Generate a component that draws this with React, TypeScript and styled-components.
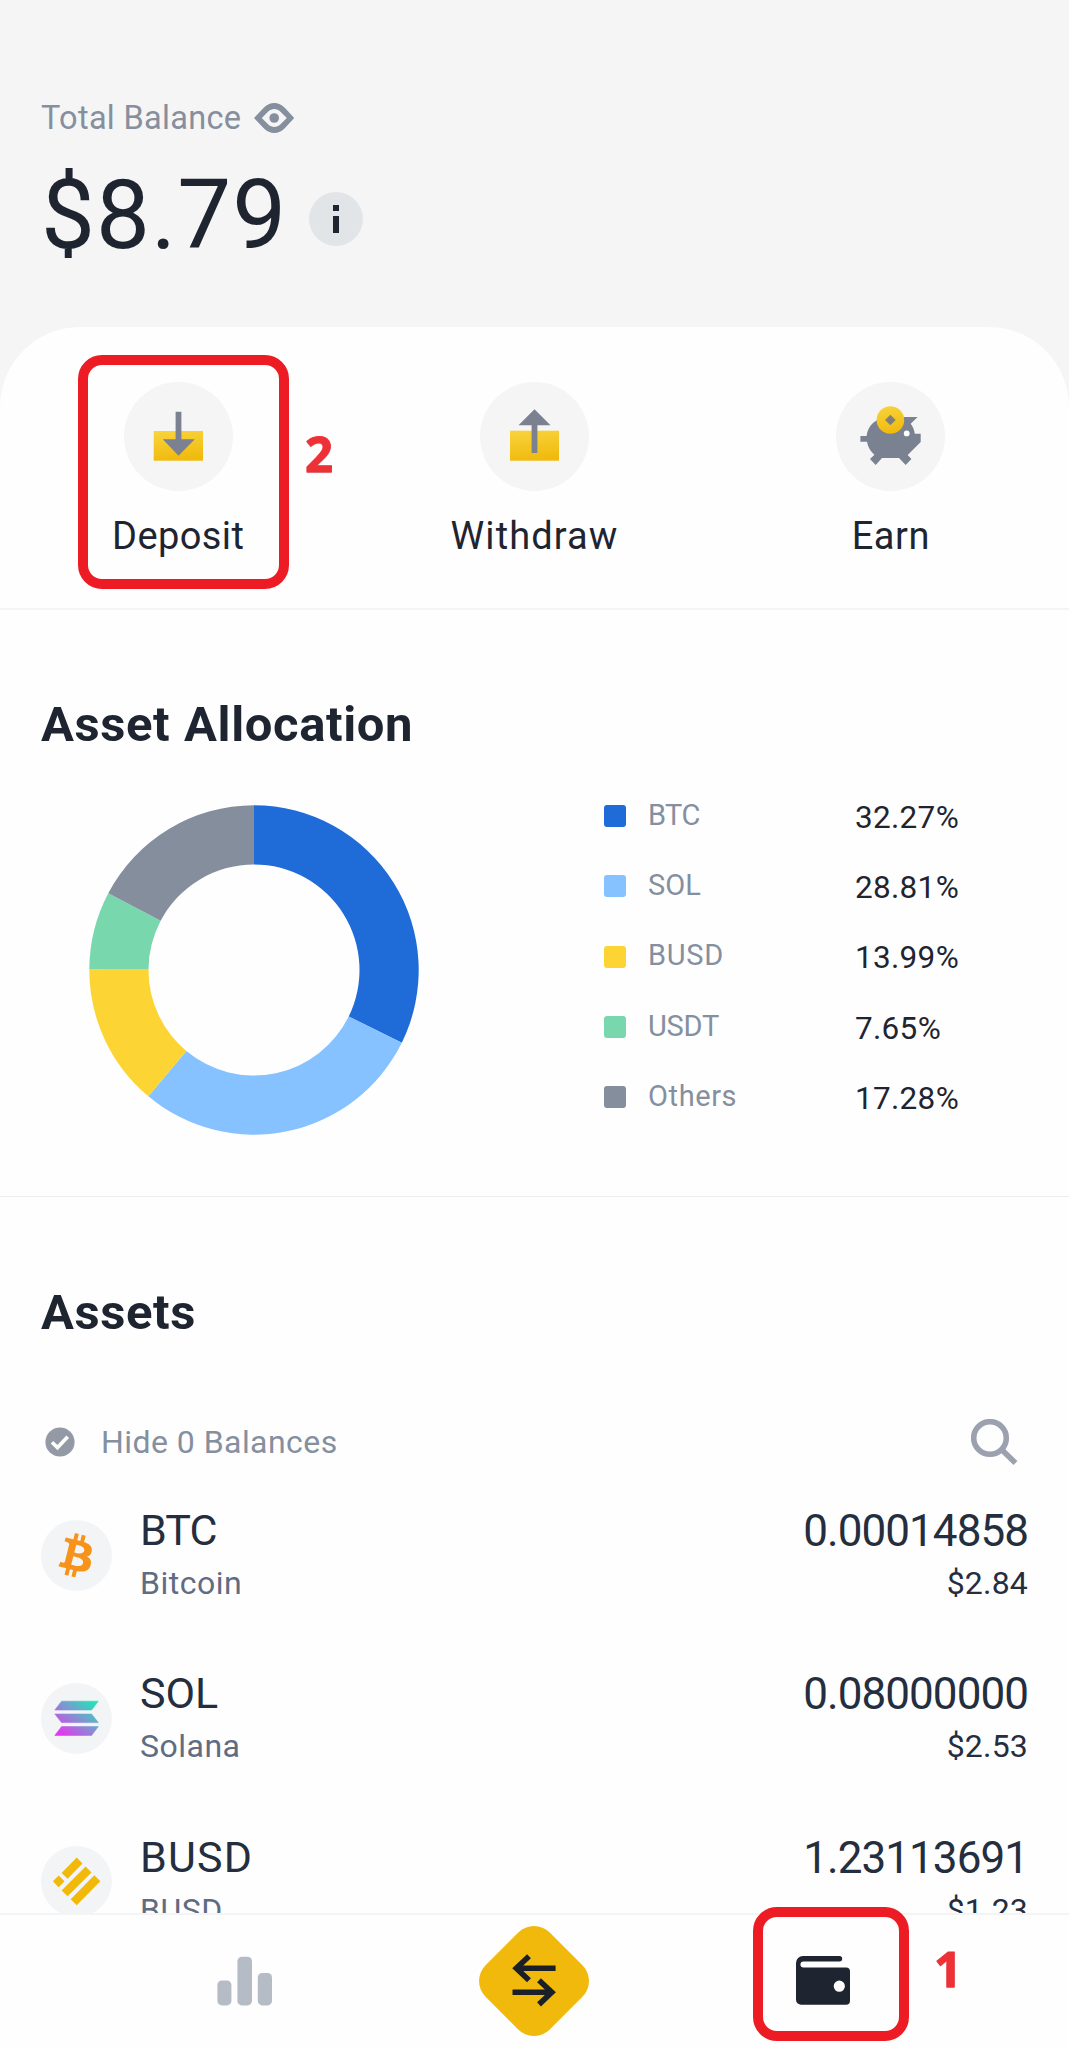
import React from "react";
import styled, { createGlobalStyle } from "styled-components";

const GlobalStyle = createGlobalStyle`
  *, *::before, *::after { box-sizing: border-box; }
  body { margin: 0; background: #f5f5f5; }
  svg { display: block; flex: none; }
`;

const ink = "#1e2530";
const slate = "#252e3f";
const muted = "#858f9e";
const line = "#f4f4f5";

const Screen = styled.div`
  position: relative;
  display: flex;
  flex-direction: column;
  width: 1069px;
  height: 2048px;
  overflow: hidden;
  background: #f5f5f5;
  color: ${ink};
  font-family: Roboto, "Liberation Sans", sans-serif;
`;

const Header = styled.header`
  height: 327px;
  flex: none;
  padding: 98px 41px 0;
`;

const BalanceLabel = styled.div`
  display: flex;
  align-items: center;
  gap: 13px;
  height: 40px;
  font-size: 32.5px;
  line-height: 40px;
  letter-spacing: 0.3px;
  color: ${muted};
`;

const BalanceRow = styled.div`
  display: flex;
  align-items: center;
  margin-top: 22px;
  height: 110px;
`;

const BalanceValue = styled.div`
  width: 268px;
  font-size: 96px;
  line-height: 110px;
  letter-spacing: 1px;
`;

const InfoBadge = styled.div`
  display: flex;
  align-items: center;
  justify-content: center;
  width: 54px;
  height: 54px;
  margin-top: 8px;
  border-radius: 50%;
  background: #e2e5e8;
`;

const Sheet = styled.main`
  flex: 1;
  min-height: 0;
  overflow: hidden;
  border-radius: 80px 80px 0 0;
  background: #fefefe;
`;

const Actions = styled.section`
  display: grid;
  grid-template-columns: repeat(3, 1fr);
  height: 283px;
  padding-top: 55px;
  border-bottom: 2px solid ${line};
`;

const Action = styled.div`
  display: flex;
  flex-direction: column;
  align-items: center;
  gap: 22px;
`;

const ActionIcon = styled.div`
  width: 109px;
  height: 109px;
  border-radius: 50%;
  background: #f5f5f5;
`;

const ActionLabel = styled.div<{ $tracking: number }>`
  font-size: 38px;
  line-height: 46px;
  letter-spacing: ${(p) => p.$tracking}px;
`;

const Allocation = styled.section`
  height: 587px;
  padding: 85px 41px 0;
  border-bottom: 1px solid #eeeeef;
`;

const Title = styled.h2`
  margin: 0;
  font-size: 49px;
  line-height: 60px;
  font-weight: 700;
  letter-spacing: 0.6px;
  word-spacing: 1px;
`;

const AllocationBody = styled.div`
  display: flex;
  margin-top: 26px;
`;

const DonutBox = styled.div`
  width: 563px;
  padding: 24px 0 0 48px;
`;

const Legend = styled.div`
  display: grid;
  grid-auto-rows: 70.3px;
`;

const LegendRow = styled.div`
  display: grid;
  grid-template-columns: 44px 207px auto;
  align-items: center;
`;

const Swatch = styled.span<{ $color: string }>`
  width: 22px;
  height: 22px;
  border-radius: 3px;
  background: ${(p) => p.$color};
`;

const LegendName = styled.span<{ $tracking: number }>`
  padding-bottom: 3px;
  font-size: 29px;
  line-height: 36px;
  letter-spacing: ${(p) => p.$tracking}px;
  color: ${muted};
`;

const LegendValue = styled.span`
  padding-top: 3px;
  font-size: 31.5px;
  line-height: 36px;
  font-weight: 450;
  letter-spacing: 0.3px;
`;

const Assets = styled.section`
  padding: 86px 41px 0;
`;

const FilterRow = styled.div`
  display: flex;
  align-items: center;
  height: 46px;
  margin-top: 76px;
  padding: 0 10px 0 4px;
`;

const FilterLabel = styled.span`
  flex: 1;
  padding-left: 26px;
  font-size: 32px;
  line-height: 40px;
  letter-spacing: 0.45px;
  color: ${muted};
`;

const AssetList = styled.div`
  display: grid;
  grid-auto-rows: 163.3px;
  margin-top: 41px;
`;

const AssetRow = styled.div`
  display: grid;
  grid-template-columns: 71px 1fr auto;
  column-gap: 28px;
  align-items: start;
`;

const CoinBadge = styled.div`
  width: 71px;
  height: 71px;
  margin-top: 13.5px;
  border-radius: 50%;
  background: #f2f4f6;
`;

const AssetText = styled.div<{ $end?: boolean }>`
  display: grid;
  row-gap: 8px;
  justify-items: ${(p) => (p.$end ? "end" : "start")};
  margin-top: -1px;
  color: ${slate};
`;

const Ticker = styled.span<{ $tracking: number }>`
  font-size: 43px;
  line-height: 50px;
  letter-spacing: ${(p) => p.$tracking}px;
`;

const CoinName = styled.span`
  font-size: 32px;
  line-height: 40px;
  letter-spacing: 0.5px;
  color: #606c82;
`;

const Amount = styled.span`
  padding-top: 2px;
  font-size: 44px;
  line-height: 48px;
  letter-spacing: -0.95px;
`;

const Fiat = styled.span`
  font-size: 32px;
  line-height: 40px;
  letter-spacing: 0.2px;
`;

const TabBar = styled.nav`
  display: grid;
  grid-template-columns: repeat(3, 289px);
  justify-content: center;
  place-items: center;
  flex: none;
  height: 135px;
  padding: 0 2px 2px 0;
  border-top: 2px solid ${line};
  background: #fefefe;
`;

const Callout = styled.div<{ $x: number; $y: number; $w: number; $h: number }>`
  position: absolute;
  left: ${(p) => p.$x}px;
  top: ${(p) => p.$y}px;
  width: ${(p) => p.$w}px;
  height: ${(p) => p.$h}px;
  border: 10px solid #ed1c24;
  border-radius: 24px;
`;

const CalloutNumber = styled.div<{ $x: number; $y: number }>`
  position: absolute;
  left: ${(p) => p.$x}px;
  top: ${(p) => p.$y}px;
  font-family: "Noto Sans", "Open Sans", sans-serif;
  font-size: 49px;
  line-height: 60px;
  font-weight: 700;
  color: #ee3137;
  -webkit-text-stroke: 1px #ee3137;
  text-shadow: 0 1px 1px rgba(110, 60, 60, 0.45);
`;

const slices = [
  { name: "BTC", value: 32.27, color: "#1f6cd8", tracking: -0.6 },
  { name: "SOL", value: 28.81, color: "#85c2ff", tracking: 0 },
  { name: "BUSD", value: 13.99, color: "#fcd535", tracking: 0.7 },
  { name: "USDT", value: 7.65, color: "#79d7ae", tracking: -0.2 },
  { name: "Others", value: 17.28, color: "#858e9d", tracking: 0.6 },
];

function Donut() {
  const c = 165;
  const outer = 164.7;
  const inner = 105.5;
  const at = (r: number, pct: number) => {
    const a = (pct / 100) * Math.PI * 2;
    return `${c + r * Math.sin(a)} ${c - r * Math.cos(a)}`;
  };
  let start = 0;
  return (
    <svg width="330" height="330" viewBox="0 0 330 330">
      {slices.map((s) => {
        const end = start + s.value;
        const d = `M${at(outer, start)} A${outer} ${outer} 0 0 1 ${at(outer, end)} L${at(inner, end)} A${inner} ${inner} 0 0 0 ${at(inner, start)} Z`;
        start = end;
        return <path key={s.name} d={d} fill={s.color} />;
      })}
    </svg>
  );
}

const Gold = ({ id }: { id: string }) => (
  <defs>
    <linearGradient id={id} x1="0.4" y1="0" x2="0.6" y2="1">
      <stop offset="0" stopColor="#f8d23a" />
      <stop offset="1" stopColor="#f0b90b" />
    </linearGradient>
  </defs>
);

const DepositIcon = () => (
  <svg width="109" height="109">
    <Gold id="goldDeposit" />
    <rect x="29.7" y="49" width="49.3" height="29.7" fill="url(#goldDeposit)" />
    <path d="M51.6 29.8h5.8v27.5h13.4L54.5 73.7 38.8 57.3h12.8z" fill="#7b8190" />
  </svg>
);

const WithdrawIcon = () => (
  <svg width="109" height="109">
    <Gold id="goldWithdraw" />
    <rect x="30" y="48.7" width="49" height="30" fill="url(#goldWithdraw)" />
    <path d="M54.5 27.3 70.5 43.3H57.4V71h-5.8V43.3H38.5z" fill="#7b8190" />
  </svg>
);

const EarnIcon = () => (
  <svg width="109" height="109">
    <Gold id="goldEarn" />
    <path
      d="M24.4 54H30.6C31.5 46 36 40 43 37.2L68.3 35H81.6L74.7 41.8C76.8 44.5 78.3 48 78.8 51.7H84.7V60L71.7 73 75.4 77 69.7 83 63 76H46L39.7 83 34 77 38.4 72.7C34.5 69.3 31.8 65 31 59.7H24.4z"
      fill="#7a8190"
    />
    <circle cx="70.7" cy="51.4" r="2.9" fill="#fff" />
    <circle cx="54.4" cy="38" r="13.8" fill="url(#goldEarn)" />
    <path d="M54.4 33.2 59.2 38 54.4 42.8 49.6 38z" fill="#7f7f78" stroke="#7f7f78" strokeWidth="1" strokeLinejoin="round" />
  </svg>
);

const BitcoinLogo = () => (
  <svg width="71" height="71" viewBox="0.3 0.1 32 32">
    <path
      fill="#f7931a"
      d="M23.189 14.02c.314-2.096-1.283-3.223-3.465-3.975l.708-2.84-1.728-.43-.69 2.765c-.454-.114-.92-.22-1.385-.326l.695-2.783L15.596 6l-.708 2.839c-.376-.086-.746-.17-1.104-.26l.002-.009-2.384-.595-.46 1.846s1.283.294 1.256.312c.7.175.826.638.805 1.006l-.806 3.235c.048.012.11.03.18.057l-.183-.045-1.13 4.532c-.086.212-.303.531-.793.41.018.025-1.256-.313-1.256-.313l-.858 1.978 2.25.561c.418.105.828.215 1.231.318l-.715 2.872 1.727.43.708-2.84c.472.127.93.245 1.378.357l-.706 2.828 1.728.43.715-2.866c2.948.558 5.164.333 6.097-2.333.752-2.146-.037-3.385-1.588-4.192 1.13-.26 1.98-1.003 2.207-2.538zm-3.95 5.538c-.533 2.147-4.148.986-5.32.695l.95-3.805c1.172.293 4.929.872 4.37 3.11zm.535-5.569c-.487 1.953-3.495.96-4.47.717l.86-3.45c.975.243 4.118.696 3.61 2.733z"
    />
  </svg>
);

const SolanaLogo = () => (
  <svg width="71" height="71">
    <defs>
      <linearGradient id="solana" gradientUnits="userSpaceOnUse" x1="20" y1="56" x2="52" y2="14">
        <stop offset="0.05" stopColor="#e834f0" />
        <stop offset="0.55" stopColor="#799ad0" />
        <stop offset="1" stopColor="#14efb2" />
      </linearGradient>
    </defs>
    <path
      d="M20.6 18.2H57.3L50.6 27H13.8zM13.8 31H50.6L57.3 39.6H20.6zM20.6 43.6H57.3L50.6 52.4H13.8z"
      fill="url(#solana)"
      stroke="url(#solana)"
      strokeWidth="0.6"
      strokeLinejoin="round"
    />
  </svg>
);

const BusdLogo = () => (
  <svg width="71" height="71">
    <path
      d="M35.7 11.6 41.5 17.4 26.6 32.8 20.6 27zM44.6 20.6 50.5 26.4 26.6 50.2 20.6 44.4zM53.3 29.3 59.3 35.3 35.7 59.3 29.7 53.3zM17.7 29.5 23.5 35.3 17.7 41.2 11.9 35.3z"
      fill="#f0b90b"
    />
  </svg>
);

const EyeIcon = () => (
  <svg width="40" height="30" viewBox="0 0 40 30">
    <path
      fillRule="evenodd"
      fill={muted}
      d="M0 15 9.5 5C16-1.6 24.5-1.6 31 5L40.3 15 31 25C24.5 31.6 16 31.6 9.5 25zM7.8 15 14 21.3C17.8 25 22.8 25 26.5 21.3L32.8 15 26.5 8.7C22.8 5 17.8 5 14 8.7z"
    />
    <circle cx="20.2" cy="15" r="4.8" fill={muted} />
  </svg>
);

const InfoIcon = () => (
  <svg width="8" height="28" viewBox="0 0 8 28">
    <path d="M1 0h6v6H1zM1 11h6v17H1z" fill={ink} />
  </svg>
);

const CheckIcon = () => (
  <svg width="30" height="30" viewBox="0 0 30 30">
    <circle cx="15" cy="15" r="14.6" fill="#939aa6" />
    <path d="M7 15.2 12.5 20.6 22.7 9.7" fill="none" stroke="#fefefe" strokeWidth="3.6" />
  </svg>
);

const SearchIcon = () => (
  <svg width="47" height="46" viewBox="0 0 47 46">
    <circle cx="19" cy="19" r="16.3" fill="none" stroke="#9ba1af" strokeWidth="5.6" />
    <path d="M30.5 30.5 44.5 44" stroke="#9ba1af" strokeWidth="5.6" />
  </svg>
);

const MarketsIcon = () => (
  <svg width="55" height="50" viewBox="0 0 55 50">
    <g fill="#b6bcc6">
      <rect x="0.4" y="24.4" width="14" height="25" rx="4.5" />
      <rect x="20.4" y="0.8" width="14.6" height="48.6" rx="4.5" />
      <rect x="40.8" y="16.9" width="14.2" height="32.5" rx="4.5" />
    </g>
  </svg>
);

const TradeIcon = () => (
  <svg width="110" height="110" viewBox="0 0 110 110">
    <path
      d="M39 6.8C48-2.2 62-2.2 71 6.8L103.2 39C112.2 48 112.2 62 103.2 71L71 103.2C62 112.2 48 112.2 39 103.2L6.8 71C-2.2 62-2.2 48 6.8 39z"
      fill="#f0b90b"
    />
    <path
      d="M76.6 42.3H38M50 30.3 37.3 42.3 50 54.2M33.5 66.3H72M60 54.3 72.8 66.3 60 78.4"
      fill="none"
      stroke="#1b2026"
      strokeWidth="5.6"
    />
  </svg>
);

const WalletIcon = () => (
  <svg width="54" height="49" viewBox="0 0 54 49">
    <path
      fillRule="evenodd"
      fill={ink}
      d="M7 0H43.5A2.7 2.7 0 0 1 43.5 5.4H7.500A3 3 0 0 0 7.5 11.5H50A4 4 0 0 1 54 15.5V44.7A4 4 0 0 1 50 48.7H5A5 5 0 0 1 0 43.7V7A7 7 0 0 1 7 0zM43.3 24.6A5.6 5.6 0 1 0 43.3 35.8 5.6 5.6 0 1 0 43.3 24.6z"
    />
  </svg>
);

const actions = [
  { label: "Deposit", icon: <DepositIcon />, tracking: 0.4 },
  { label: "Withdraw", icon: <WithdrawIcon />, tracking: 1.1 },
  { label: "Earn", icon: <EarnIcon />, tracking: 0.5 },
];

const assets = [
  { ticker: "BTC", name: "Bitcoin", amount: "0.00014858", fiat: "$2.84", icon: <BitcoinLogo />, tracking: -0.9 },
  { ticker: "SOL", name: "Solana", amount: "0.08000000", fiat: "$2.53", icon: <SolanaLogo />, tracking: 0 },
  { ticker: "BUSD", name: "BUSD", amount: "1.23113691", fiat: "$1.23", icon: <BusdLogo />, tracking: 1.2 },
];

export default function App() {
  return (
    <Screen>
      <GlobalStyle />
      <Header>
        <BalanceLabel>
          Total Balance
          <EyeIcon />
        </BalanceLabel>
        <BalanceRow>
          <BalanceValue>$8.79</BalanceValue>
          <InfoBadge>
            <InfoIcon />
          </InfoBadge>
        </BalanceRow>
      </Header>

      <Sheet>
        <Actions>
          {actions.map((a) => (
            <Action key={a.label}>
              <ActionIcon>{a.icon}</ActionIcon>
              <ActionLabel $tracking={a.tracking}>{a.label}</ActionLabel>
            </Action>
          ))}
        </Actions>

        <Allocation>
          <Title>Asset Allocation</Title>
          <AllocationBody>
            <DonutBox>
              <Donut />
            </DonutBox>
            <Legend>
              {slices.map((s) => (
                <LegendRow key={s.name}>
                  <Swatch $color={s.color} />
                  <LegendName $tracking={s.tracking}>{s.name}</LegendName>
                  <LegendValue>{s.value.toFixed(2)}%</LegendValue>
                </LegendRow>
              ))}
            </Legend>
          </AllocationBody>
        </Allocation>

        <Assets>
          <Title>Assets</Title>
          <FilterRow>
            <CheckIcon />
            <FilterLabel>Hide 0 Balances</FilterLabel>
            <SearchIcon />
          </FilterRow>
          <AssetList>
            {assets.map((a) => (
              <AssetRow key={a.ticker}>
                <CoinBadge>{a.icon}</CoinBadge>
                <AssetText>
                  <Ticker $tracking={a.tracking}>{a.ticker}</Ticker>
                  <CoinName>{a.name}</CoinName>
                </AssetText>
                <AssetText $end>
                  <Amount>{a.amount}</Amount>
                  <Fiat>{a.fiat}</Fiat>
                </AssetText>
              </AssetRow>
            ))}
          </AssetList>
        </Assets>
      </Sheet>

      <TabBar>
        <MarketsIcon />
        <TradeIcon />
        <WalletIcon />
      </TabBar>

      <Callout $x={78} $y={355} $w={211} $h={234} />
      <CalloutNumber $x={305} $y={423}>2</CalloutNumber>
      <Callout $x={753} $y={1907} $w={156} $h={134} />
      <CalloutNumber $x={934} $y={1938}>1</CalloutNumber>
    </Screen>
  );
}
